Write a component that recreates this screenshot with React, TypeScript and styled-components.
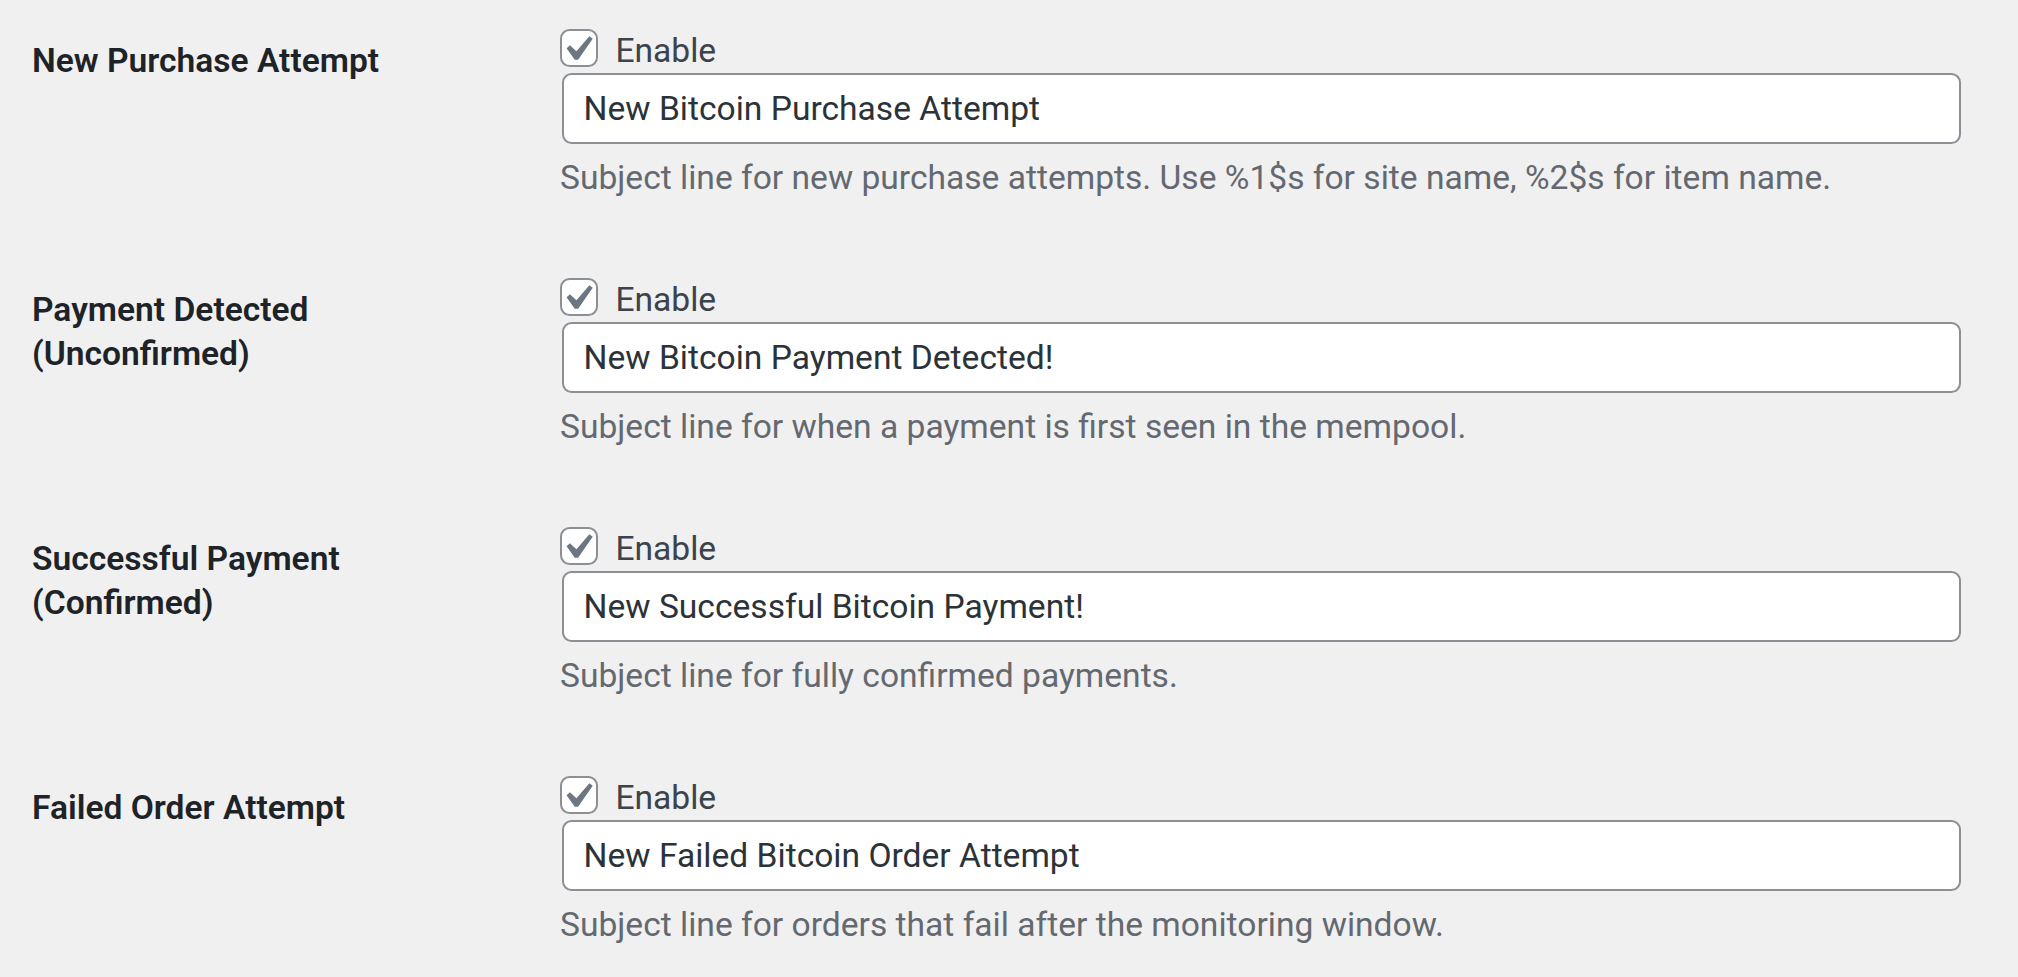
import React from "react";
import styled, { createGlobalStyle } from "styled-components";

const GlobalStyle = createGlobalStyle`
  html, body {
    margin: 0;
    padding: 0;
    background: #f0f0f1;
  }
  body {
    font-family: Roboto, "Liberation Sans", sans-serif;
  }
`;

const SPage = styled.div`
  width: 2018px;
  height: 977px;
  overflow: hidden;
  box-sizing: border-box;
  padding-left: 32px;
`;

const SRow = styled.div`
  display: flex;
  align-items: flex-start;
`;

const SLabel = styled.div`
  width: 480px;
  margin-right: 48px;
  padding-top: 39px;
  font-size: 33.6px;
  line-height: 43.7px;
  font-weight: 600;
  color: #1d2327;
`;

const SField = styled.div`
  display: flex;
  flex-direction: column;
  align-items: flex-start;
  padding: 29px 0 49.4px;
`;

const SCheckLine = styled.label`
  display: flex;
  align-items: flex-start;
  column-gap: 17px;
  font-size: 33.6px;
  line-height: 43.7px;
  color: #3c434a;
`;

const SBox = styled.span`
  display: block;
  width: 38.4px;
  height: 38.4px;
  box-sizing: border-box;
  border: 2.2px solid #8c8f94;
  border-radius: 9.6px;
  background: #fff;
  overflow: visible;

  svg {
    display: block;
    width: 50.4px;
    height: 50.4px;
    margin: -7.2px 0 0 -9.6px;
  }
`;

const SInput = styled.input`
  width: 1399px;
  height: 71px;
  box-sizing: border-box;
  margin: 0 0 0 2.4px;
  padding: 0 19.2px;
  border: 2.2px solid #8c8f94;
  border-radius: 9.6px;
  background: #fff;
  font-family: Roboto, "Liberation Sans", sans-serif;
  font-size: 33.6px;
  color: #2c3338;
  outline: none;
`;

const SDescription = styled.p`
  margin: 12.2px 0 0;
  font-size: 33.6px;
  line-height: 43.7px;
  color: #646970;
`;

type Setting = {
  label: string;
  value: string;
  description: string;
};

const settings: Setting[] = [
  {
    label: "New Purchase Attempt",
    value: "New Bitcoin Purchase Attempt",
    description:
      "Subject line for new purchase attempts. Use %1$s for site name, %2$s for item name.",
  },
  {
    label: "Payment Detected (Unconfirmed)",
    value: "New Bitcoin Payment Detected!",
    description: "Subject line for when a payment is first seen in the mempool.",
  },
  {
    label: "Successful Payment (Confirmed)",
    value: "New Successful Bitcoin Payment!",
    description: "Subject line for fully confirmed payments.",
  },
  {
    label: "Failed Order Attempt",
    value: "New Failed Bitcoin Order Attempt",
    description: "Subject line for orders that fail after the monitoring window.",
  },
];

function CheckMark() {
  return (
    <svg viewBox="0 0 20 20" aria-hidden="true">
      <path
        d="M14.83 4.89l1.34.94-5.81 8.38H9.02L5.78 9.67l1.34-1.25 2.57 2.4z"
        fill="#6c7782"
      />
    </svg>
  );
}

function SettingRow({ label, value, description }: Setting) {
  return (
    <SRow>
      <SLabel>{label}</SLabel>
      <SField>
        <SCheckLine>
          <SBox>
            <CheckMark />
          </SBox>
          Enable
        </SCheckLine>
        <SInput type="text" defaultValue={value} />
        <SDescription>{description}</SDescription>
      </SField>
    </SRow>
  );
}

export default function App() {
  return (
    <>
      <GlobalStyle />
      <SPage>
        {settings.map((s) => (
          <SettingRow key={s.label} {...s} />
        ))}
      </SPage>
    </>
  );
}
